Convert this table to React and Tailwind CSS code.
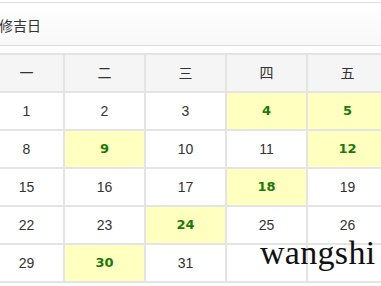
import React from "react";

const days = ["一", "二", "三", "四", "五"];
const rows = [
  [1, 2, 3, 4, 5],
  [8, 9, 10, 11, 12],
  [15, 16, 17, 18, 19],
  [22, 23, 24, 25, 26],
  [29, 30, 31, null, null],
];
const lucky = new Set([4, 5, 9, 12, 18, 24, 30]);

export default function App() {
  return (
    <div className="relative w-[381px] h-[286px] overflow-hidden bg-white" style={{ fontFamily: '"Liberation Sans", "Noto Sans CJK SC", sans-serif' }}>
      <div className="pt-[2px]">
        <div className="ml-[-18px] w-[420px] h-[44px] border-y border-[#dedede] bg-gradient-to-b from-white to-[#f8f8f8] flex items-center pl-[17px] pt-[4px] text-[14px] text-[#333]">
          修吉日
        </div>
        <div className="mt-[7px] ml-[-18px] w-[410px] grid grid-cols-[repeat(5,79px)] gap-[2px] bg-[#e4e4e4] border-y-2 border-l-2 border-[#e4e4e4]">
          {days.map((d, i) => (
            <div key={d} className={"h-[36px] bg-[#f5f5f5] flex items-center justify-center text-[14px] text-[#333] " + (i === 0 ? "pl-[6px]" : "")}>
              {d}
            </div>
          ))}
          {rows.flat().map((n, i) => {
            const hl = n !== null && lucky.has(n);
            return (
              <div
                key={i}
                className={
                  "h-[36px] flex items-center justify-center " +
                  (i % 5 === 0 ? "pl-[6px] " : "") +
                  (hl
                    ? "bg-[#ffffc0] text-[#1b7a0c] font-bold text-[13px]"
                    : "bg-white text-[#333] text-[14px]")
                }
                style={hl ? { fontFamily: '"DejaVu Sans", sans-serif' } : undefined}
              >
                {n}
              </div>
            );
          })}
        </div>
      </div>
      <div
        className="absolute left-[260px] top-[236px] text-[34px] leading-[34px] tracking-[0.3px] text-[#111]"
        style={{ fontFamily: '"Liberation Serif", serif' }}
      >
        wangshi
      </div>
    </div>
  );
}
